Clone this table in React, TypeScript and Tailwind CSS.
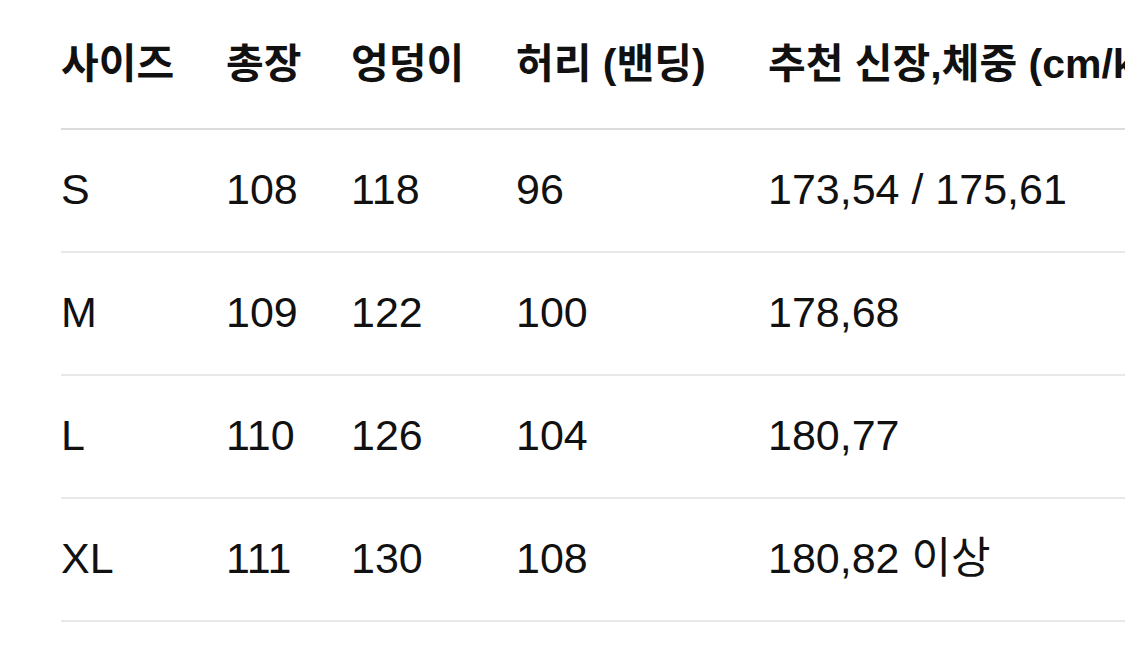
import React from 'react';

const rows = [
  ['S', '108', '118', '96', '173,54 / 175,61'],
  ['M', '109', '122', '100', '178,68'],
  ['L', '110', '126', '104', '180,77'],
  ['XL', '111', '130', '108', '180,82 이상'],
];

const widths = [
  'w-[165px] shrink-0',
  'w-[125px] shrink-0',
  'w-[165px] shrink-0',
  'w-[252px] shrink-0',
  'w-[520px] shrink-0 whitespace-nowrap',
];

export default function App() {
  return (
    <div className="w-[1125px] h-[659px] overflow-hidden bg-white pl-[61px] text-[#111111] font-['Liberation_Sans','Noto_Sans_CJK_KR',sans-serif]">
      <div className="w-[1240px]">
        <div className="flex h-[130px] items-center border-b-2 border-[#dcdcdc] text-[41px] font-bold pt-[2px]">
          <div className={widths[0]}>사이즈</div>
          <div className={widths[1]}>총장</div>
          <div className={widths[2]}>엉덩이</div>
          <div className={widths[3]}>허리 (밴딩)</div>
          <div className={widths[4]}>추천 신장,체중 (cm/kg)</div>
        </div>
        {rows.map((r) => (
          <div
            key={r[0]}
            className="flex h-[123px] items-center border-b-2 border-[#e8e8e8] text-[43px] pb-[2px]"
          >
            <div className={widths[0]}>{r[0]}</div>
            <div className={widths[1]}>{r[1]}</div>
            <div className={widths[2]}>{r[2]}</div>
            <div className={widths[3]}>{r[3]}</div>
            <div className={widths[4]}>{r[4]}</div>
          </div>
        ))}
      </div>
    </div>
  );
}
